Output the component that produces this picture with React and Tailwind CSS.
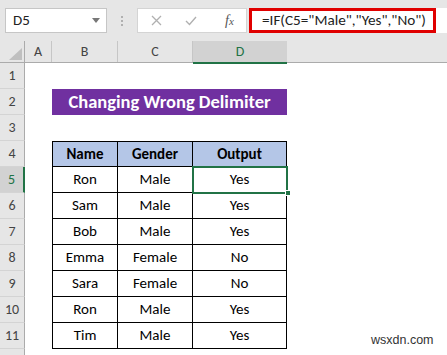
import React from "react";

const data = [
  ["Ron", "Male", "Yes"],
  ["Sam", "Male", "Yes"],
  ["Bob", "Male", "Yes"],
  ["Emma", "Female", "No"],
  ["Sara", "Female", "No"],
  ["Ron", "Male", "Yes"],
  ["Tim", "Male", "Yes"],
];

function RowHeader({ n, selected }) {
  return (
    <div
      className={
        "w-[25px] shrink-0 h-full flex items-center justify-center text-[14px] border-b border-[#d4d4d4] " +
        (selected
          ? "bg-[#d2d2d2] text-[#217346] border-r-2 border-r-[#217346]"
          : "bg-[#e6e6e6] text-[#444] border-r border-r-[#ababab]")
      }
    >
      {n}
    </div>
  );
}

function Cell({ w, children, first, top, head }) {
  return (
    <div
      className={
        "h-full shrink-0 flex items-center justify-center text-[15px] text-black border-black border-r border-b " +
        w +
        (first ? " border-l" : "") +
        (top ? " border-t" : "") +
        (head ? " bg-[#b4c6e7] font-bold" : "")
      }
    >
      {children}
    </div>
  );
}

export default function App() {
  const font = { fontFamily: "Calibri, Carlito, Lato, 'Open Sans', sans-serif" };
  return (
    <div
      className="w-[447px] h-[355px] overflow-hidden bg-white relative"
      style={font}
    >
      {/* Toolbar */}
      <div className="h-[41px] bg-[#e6e6e6] flex items-start pt-[8px]">
        <div className="ml-[5px] w-[102px] h-[25px] bg-white border border-[#c6c6c6] flex items-center justify-between pl-[7px] pr-[6px]">
          <span className="text-[15px] text-[#222]">D5</span>
          <svg width="8" height="5" viewBox="0 0 8 5">
            <path d="M0 0 L8 0 L4 5 Z" fill="#777" />
          </svg>
        </div>
        <div className="w-[30px] h-[25px] flex flex-col items-center justify-center gap-[2px]">
          <div className="w-[2px] h-[2px] bg-[#b0b0b0]" />
          <div className="w-[2px] h-[2px] bg-[#b0b0b0]" />
          <div className="w-[2px] h-[2px] bg-[#b0b0b0]" />
        </div>
        <div className="w-[110px] h-[25px] bg-white border border-[#d4d4d4] flex items-center">
          <svg className="ml-[13px]" width="11" height="11" viewBox="0 0 11 11">
            <path d="M1 1 L10 10 M10 1 L1 10" stroke="#b0b0b0" strokeWidth="1.3" />
          </svg>
          <svg className="ml-[23px]" width="12" height="10" viewBox="0 0 12 10">
            <path d="M1 5 L4.5 8.5 L11 1" stroke="#b0b0b0" strokeWidth="1.4" fill="none" />
          </svg>
          <span
            className="ml-[28px] text-[14px] italic text-[#555]"
            style={{ fontFamily: "'Liberation Serif', serif" }}
          >
            f<span className="text-[11px]">x</span>
          </span>
        </div>
        <div className="ml-[2px] flex-1 h-[25px] bg-white flex">
          <div className="w-[187px] h-full border-[3px] border-[#e00000] flex items-center pl-[10px]">
            <span className="text-[15.2px] text-[#222] whitespace-nowrap">
              =IF(C5="Male","Yes","No")
            </span>
          </div>
        </div>
      </div>

      {/* Column header */}
      <div className="h-[22px] flex bg-[#e6e6e6] border-b border-[#ababab] text-[14px] text-[#444]">
        <div className="w-[25px] shrink-0 relative border-r border-[#ababab]">
          <svg className="absolute left-[9px] top-[7px]" width="13" height="12" viewBox="0 0 13 12">
            <path d="M0 12 L13 12 L13 0 Z" fill="#bfbfbf" />
          </svg>
        </div>
        <div className="w-[27px] shrink-0 border-r border-[#c6c6c6] flex items-center justify-center">A</div>
        <div className="w-[66px] shrink-0 border-r border-[#c6c6c6] flex items-center justify-center">B</div>
        <div className="w-[75px] shrink-0 border-r border-[#c6c6c6] flex items-center justify-center">C</div>
        <div className="w-[94px] shrink-0 bg-[#d2d2d2] border-b-2 border-[#217346] flex items-center justify-center text-[#217346] h-[23px]">D</div>
        <div className="flex-1" />
      </div>

      {/* Rows */}
      <div className="flex flex-col">
        <div className="h-[26px] flex">
          <RowHeader n={1} />
        </div>
        <div className="h-[26px] flex">
          <RowHeader n={2} />
          <div className="w-[27px] shrink-0" />
          <div className="w-[235px] h-[26px] bg-[#7030a0] flex items-center justify-center text-white font-bold text-[18.5px]">
            Changing Wrong Delimiter
          </div>
        </div>
        <div className="h-[26px] flex">
          <RowHeader n={3} />
        </div>
        <div className="h-[26px] flex">
          <RowHeader n={4} />
          <div className="w-[27px] shrink-0" />
          <Cell w="w-[66px]" first top head>Name</Cell>
          <Cell w="w-[75px]" top head>Gender</Cell>
          <Cell w="w-[94px]" top head>Output</Cell>
        </div>
        {data.map((r, i) => (
          <div key={i} className="h-[26px] flex">
            <RowHeader n={i + 5} selected={i === 0} />
            <div className="w-[27px] shrink-0" />
            <Cell w="w-[66px]" first>{r[0]}</Cell>
            <Cell w="w-[75px]">{r[1]}</Cell>
            <Cell w="w-[94px]">{r[2]}</Cell>
          </div>
        ))}
        <div className="h-[26px] flex">
          <RowHeader n="" />
        </div>
      </div>

      {/* Selection */}
      <div className="absolute left-[192px] top-[166px] w-[96px] h-[28px] border-2 border-[#217346]" />
      <div className="absolute left-[285px] top-[190px] w-[6px] h-[6px] bg-[#217346] border border-white" />

      {/* Watermark */}
      <div
        className="absolute left-[371px] top-[331px] text-[12.5px] text-[#333]"
        style={{ fontFamily: "'Liberation Sans', Arial, sans-serif" }}
      >
        wsxdn.com
      </div>
    </div>
  );
}
